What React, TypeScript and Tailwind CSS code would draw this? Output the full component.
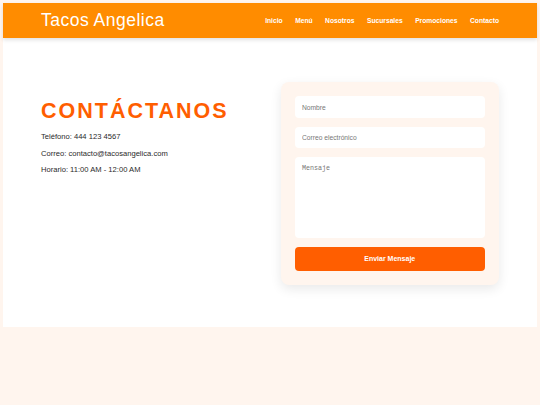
const links = ['Inicio', 'Menú', 'Nosotros', 'Sucursales', 'Promociones', 'Contacto']

export default function App() {
  return (
    <div className="min-h-screen bg-[#fff5ee] p-[3.4px] font-['Liberation_Sans',Arial,sans-serif]">
      {/* Top bar */}
      <header className="relative z-10 flex h-[35px] items-center justify-between bg-[#ff8c00] px-[37.6px] shadow-[0_2px_4px_rgba(0,0,0,0.12)]">
        <h1 className="text-[17.5px] leading-none tracking-[0.5px] text-white">Tacos Angelica</h1>
        <nav className="flex gap-[12.5px]">
          {links.map((l) => (
            <a key={l} href="#" className="text-[6.7px] font-bold text-white">
              {l}
            </a>
          ))}
        </nav>
      </header>

      {/* Contact section */}
      <section className="grid grid-cols-2 items-start gap-[21px] bg-white px-[37.6px] pt-[43.6px] pb-[42px]">
        <div className="mt-[19px]">
          <h2 className="text-[21.5px] font-bold leading-none tracking-[2px] text-[#ff5e00]">CONTÁCTANOS</h2>
          <div className="mt-[7px] flex flex-col text-[7.6px] leading-[16.5px] text-[#2a2a2a]">
            <p>Teléfono: 444 123 4567</p>
            <p>Correo: contacto@tacosangelica.com</p>
            <p>Horario: 11:00 AM - 12:00 AM</p>
          </div>
        </div>

        <form className="flex flex-col gap-[8.6px] rounded-[8px] bg-[#fff5ee] p-[14.5px] shadow-[0_4px_12px_rgba(0,0,0,0.09)]">
          <input
            type="text"
            placeholder="Nombre"
            className="h-[21.7px] w-full rounded-[4px] bg-white px-[7px] text-[6.7px] outline-none placeholder:text-[#777]"
          />
          <input
            type="email"
            placeholder="Correo electrónico"
            className="h-[21.7px] w-full rounded-[4px] bg-white px-[7px] text-[6.7px] outline-none placeholder:text-[#777]"
          />
          <textarea
            placeholder="Mensaje"
            className="h-[81px] w-full resize-none rounded-[4px] bg-white px-[7px] py-[6px] font-['Liberation_Mono',monospace] text-[6.7px] outline-none placeholder:text-[#777]"
          />
          <button
            type="button"
            className="h-[24.3px] w-full rounded-[4px] bg-[#ff5e00] text-[7px] font-bold text-white"
          >
            Enviar Mensaje
          </button>
        </form>
      </section>
    </div>
  )
}
